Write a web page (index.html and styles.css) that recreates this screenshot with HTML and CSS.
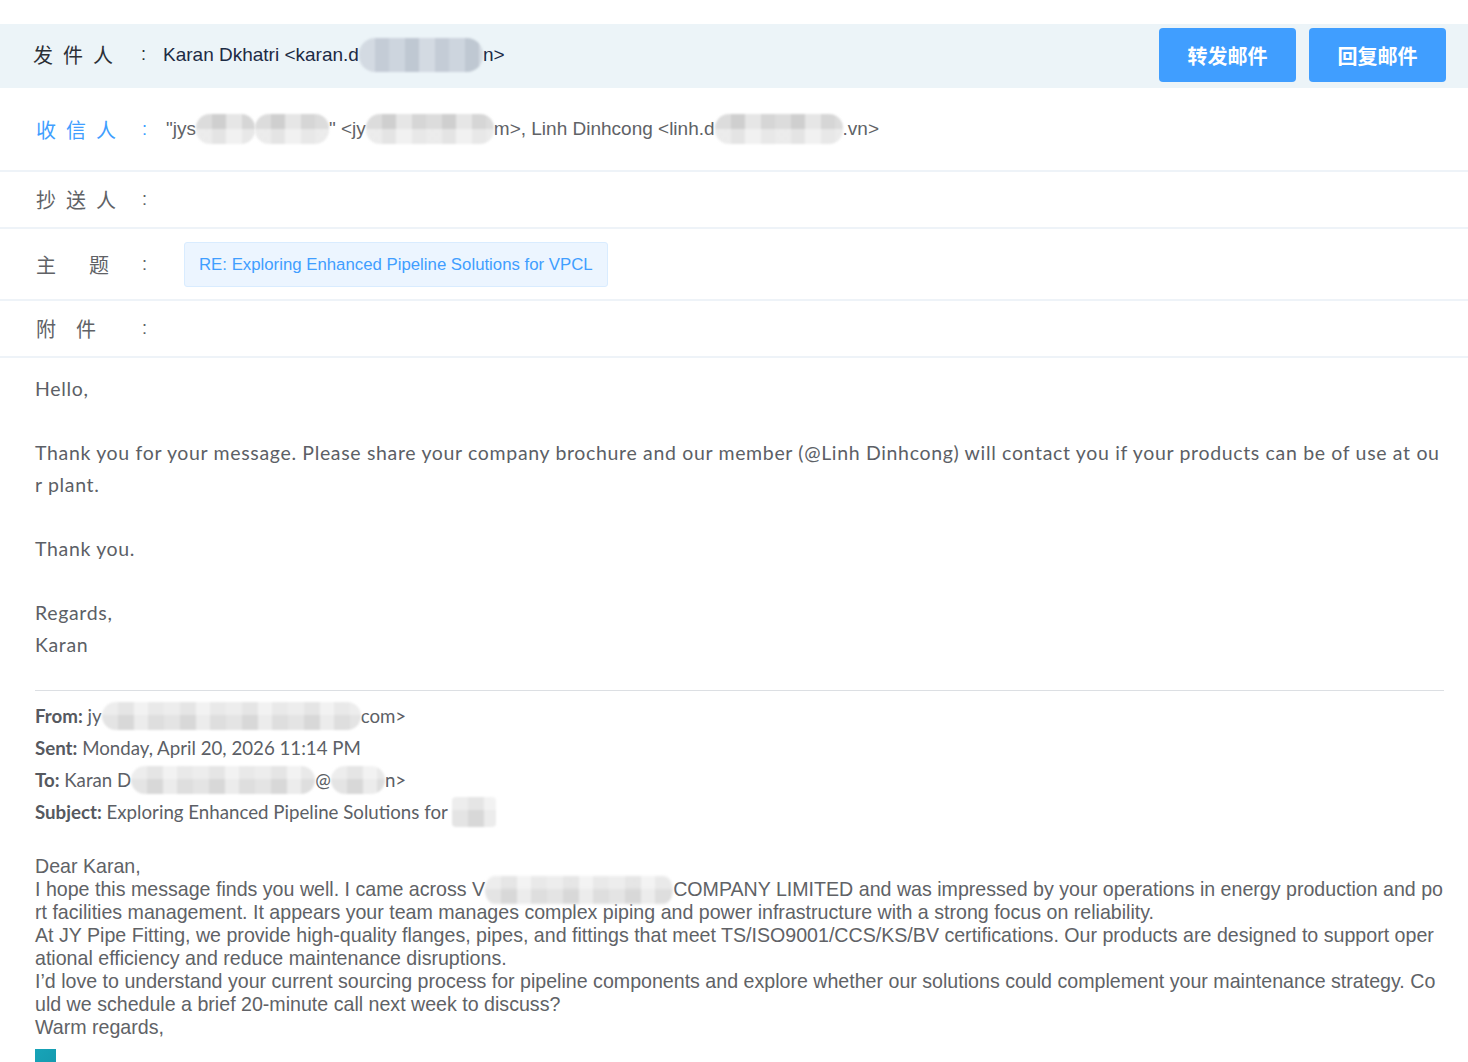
FILE: index.html
```html
<!DOCTYPE html>
<html lang="zh-CN">
<head>
<meta charset="utf-8">
<title>邮件详情</title>
<link rel="stylesheet" href="styles.css">
</head>
<body>
<div class="page">
  <div class="row row-from">
    <div class="label label-from">发件人</div>
    <div class="colon">:</div>
    <div class="value value-from">Karan Dkhatri &lt;karan.d<span class="redact redact-blue" style="width:124px"></span>n&gt;</div>
    <div class="actions">
      <button class="btn">转发邮件</button>
      <button class="btn">回复邮件</button>
    </div>
  </div>

  <div class="row row-to">
    <div class="label label-to">收信人</div>
    <div class="colon colon-to">:</div>
    <div class="value value-gray">"jys<span class="redact" style="width:59px"></span><span class="redact" style="width:74px"></span>" &lt;jy<span class="redact" style="width:128px"></span>m&gt;, Linh Dinhcong &lt;linh.d<span class="redact" style="width:128px"></span>.vn&gt;</div>
  </div>

  <div class="row row-cc">
    <div class="label label-cc">抄送人</div>
    <div class="colon">:</div>
    <div class="value"></div>
  </div>

  <div class="row row-subject">
    <div class="label label-subject">主题</div>
    <div class="colon">:</div>
    <div class="value"><span class="subject-tag">RE: Exploring Enhanced Pipeline Solutions for VPCL</span></div>
  </div>

  <div class="row row-attach">
    <div class="label label-attach">附件</div>
    <div class="colon">:</div>
    <div class="value"></div>
  </div>

  <div class="mail-body">
    <p class="para">Hello,</p>
    <p class="para">Thank you for your message. Please share your company brochure and our member (@Linh Dinhcong) will contact you if your products can be of use at our plant.</p>
    <p class="para">Thank you.</p>
    <p class="para para-last">Regards,<br>Karan</p>

    <div class="divider"></div>

    <div class="quote-head">
      <div><b>From:</b> jy<span class="redact redact-q" style="width:259px"></span>com&gt;</div>
      <div><b>Sent:</b> Monday, April 20, 2026 11:14 PM</div>
      <div><b>To:</b> Karan D<span class="redact redact-q" style="width:184px"></span>@<span class="redact redact-q" style="width:54px"></span>n&gt;</div>
      <div><b>Subject:</b> Exploring Enhanced Pipeline Solutions for <span class="redact redact-q redact-sq" style="width:44px"></span></div>
    </div>

    <div class="quote-body">
      <div>Dear Karan,</div>
      <div>I hope this message finds you well. I came across V<span class="redact redact-q redact-inline" style="width:188px"></span>COMPANY LIMITED and was impressed by your operations in energy production and port facilities management. It appears your team manages complex piping and power infrastructure with a strong focus on reliability.</div>
      <div>At JY Pipe Fitting, we provide high-quality flanges, pipes, and fittings that meet TS/ISO9001/CCS/KS/BV certifications. Our products are designed to support operational efficiency and reduce maintenance disruptions.</div>
      <div>I’d love to understand your current sourcing process for pipeline components and explore whether our solutions could complement your maintenance strategy. Could we schedule a brief 20-minute call next week to discuss?</div>
      <div>Warm regards,</div>
      <div class="logo"></div>
    </div>
  </div>
</div>
</body>
</html>
```

FILE: styles.css
```css
html, body {
  margin: 0;
  padding: 0;
  background: #ffffff;
}

.page {
  padding-top: 24px;
  font-family: "Liberation Sans", Arial, "Noto Sans CJK SC", sans-serif;
}

.row {
  display: flex;
  align-items: center;
  box-sizing: border-box;
  border-bottom: 2px solid #eef3f8;
  padding-left: 36px;
  padding-right: 22px;
}

.row-from {
  height: 64px;
  padding-left: 33px;
  padding-bottom: 3px;
  background: #ecf4f8;
  border-bottom: none;
}

.row-to { height: 84px; }
.row-cc { height: 57px; }
.row-subject { height: 72px; }
.row-attach { height: 57px; }

.label {
  font-family: "Noto Sans CJK SC", sans-serif;
  font-size: 20px;
  color: #606266;
  width: 106px;
  white-space: nowrap;
}

.label-from { color: #2b2f36; letter-spacing: 10px; width: 108px; }
.label-to { color: #409eff; letter-spacing: 10px; }
.label-cc { letter-spacing: 10px; }
.label-subject { letter-spacing: 33px; }
.label-attach { letter-spacing: 20px; }

.colon {
  width: 22px;
  font-size: 18px;
  color: #606266;
}

.row-from .colon { color: #2b2f36; }
.colon-to { color: #409eff; }

.value {
  flex: 1;
  font-size: 19px;
  white-space: nowrap;
  display: flex;
  align-items: center;
}

.value-from { color: #1c2a44; }
.value-gray { color: #606266; padding-left: 2px; }

.row-subject .value { padding-left: 20px; }

.subject-tag {
  display: inline-block;
  height: 43px;
  line-height: 43px;
  padding: 0 14px;
  background: #ecf5ff;
  border: 1px solid #d9ecff;
  border-radius: 3px;
  color: #409eff;
  font-size: 16.8px;
}

.actions {
  display: flex;
  gap: 13px;
  align-self: flex-start;
  margin-top: 4px;
}

.btn {
  width: 137px;
  height: 54px;
  border: none;
  border-radius: 4px;
  background: #409eff;
  color: #ffffff;
  font-family: "Noto Sans CJK SC", sans-serif;
  font-size: 20px;
  font-weight: 700;
  padding: 0;
}

.redact {
  display: inline-block;
  height: 30px;
  border-radius: 14px;
  background:
    linear-gradient(180deg, rgba(255,255,255,0) 0 50%, rgba(255,255,255,0.45) 50% 100%),
    repeating-linear-gradient(90deg, #dcdcdc 0 16px, #cfcfcf 16px 30px, #e6e6e6 30px 46px, #d6d6d6 46px 60px);
  filter: blur(1px);
}

.redact-blue {
  height: 34px;
  background:
    repeating-linear-gradient(90deg, #d3dae2 0 16px, #c4ccd6 16px 30px, #cdd5de 30px 46px, #bfc8d2 46px 60px);
  border-radius: 16px;
}

.redact-q {
  height: 28px;
  background:
    linear-gradient(180deg, rgba(255,255,255,0.35) 0 45%, rgba(255,255,255,0) 45% 100%),
    repeating-linear-gradient(90deg, #e4e4e4 0 16px, #d8d8d8 16px 32px, #ececec 32px 46px, #dedede 46px 62px);
}

.redact-sq {
  border-radius: 4px;
  height: 30px;
  vertical-align: middle;
}

.mail-body {
  padding: 15px 24px 0 35px;
}

.para {
  margin: 0 0 32px 0;
  font-family: Lato, "Liberation Sans", sans-serif;
  font-size: 19.5px;
  letter-spacing: 0.66px;
  line-height: 32px;
  color: #5c5f66;
  word-break: break-all;
}

.para-last { margin-bottom: 0; }

.divider {
  margin-top: 29px;
  height: 1px;
  background: #dcdfe3;
}

.quote-head {
  margin-top: 9px;
  font-family: Lato, "Liberation Sans", sans-serif;
  font-size: 18.7px;
  line-height: 32px;
  color: #5c5f66;
}

.quote-head > div {
  display: flex;
  align-items: center;
  white-space: pre;
}

.quote-head b {
  font-weight: 700;
  color: #56595f;
}

.quote-body {
  margin-top: 27px;
  font-family: "Liberation Sans", Arial, sans-serif;
  font-size: 19.63px;
  line-height: 23px;
  color: #606266;
  word-break: break-all;
}

.quote-body .redact-inline {
  height: 20px;
  vertical-align: -4px;
  transform: scaleY(1.4);
}

.logo {
  margin-top: 10px;
  width: 21px;
  height: 40px;
  background: linear-gradient(135deg, #17a4b8 0%, #1493a8 100%);
}
```
